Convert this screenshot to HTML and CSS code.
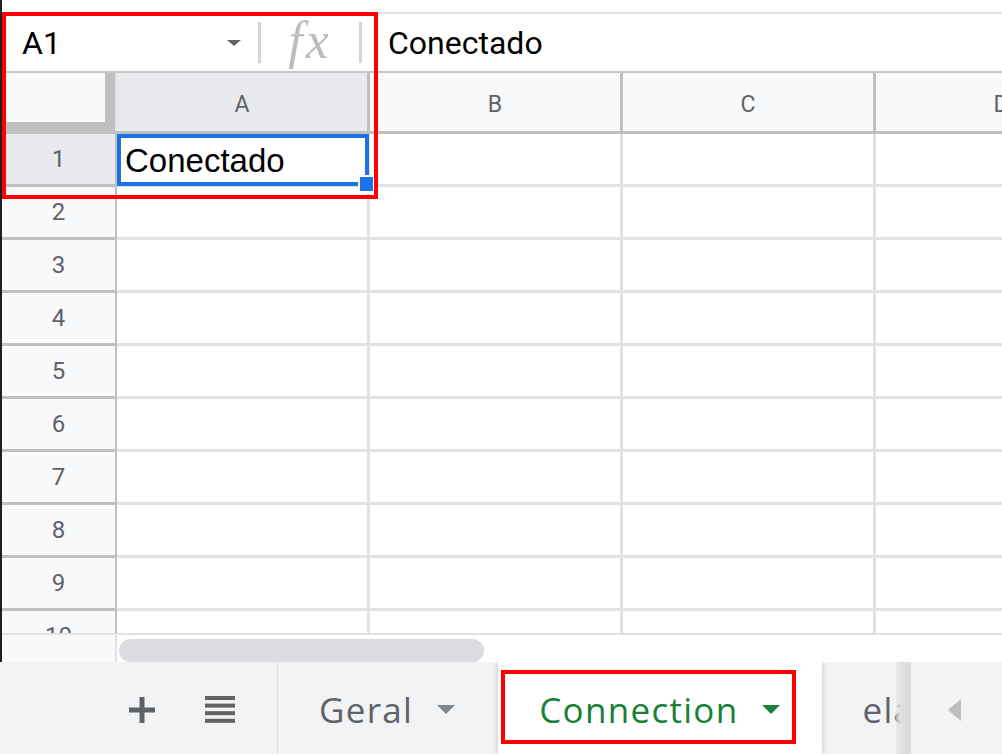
FILE: index.html
```html
<!DOCTYPE html>
<html lang="pt">
<head>
<meta charset="utf-8">
<title>Planilha</title>
<link rel="stylesheet" href="styles.css">
</head>
<body>
<div class="app">
  <div class="sheet">
    <div class="topstrip"></div>
    <div class="fbar">
      <div class="namebox"><span class="ref">A1</span><span class="caret"></span></div>
      <div class="vsep"></div>
      <div class="fx">fx</div>
      <div class="vsep"></div>
      <div class="ftext">Conectado</div>
    </div>
    <div class="hdr">
      <div class="corner"></div>
      <div class="ch sel">A</div>
      <div class="ch">B</div>
      <div class="ch">C</div>
      <div class="ch">D</div>
    </div>
    <div class="body">
      <div class="row"><div class="rh sel">1</div><div class="cell a1"><span>Conectado</span><div class="selbox"></div><div class="handle"></div></div><div class="cell"></div><div class="cell"></div><div class="cell"></div></div>
      <div class="row"><div class="rh">2</div><div class="cell"></div><div class="cell"></div><div class="cell"></div><div class="cell"></div></div>
      <div class="row"><div class="rh">3</div><div class="cell"></div><div class="cell"></div><div class="cell"></div><div class="cell"></div></div>
      <div class="row"><div class="rh">4</div><div class="cell"></div><div class="cell"></div><div class="cell"></div><div class="cell"></div></div>
      <div class="row"><div class="rh">5</div><div class="cell"></div><div class="cell"></div><div class="cell"></div><div class="cell"></div></div>
      <div class="row"><div class="rh">6</div><div class="cell"></div><div class="cell"></div><div class="cell"></div><div class="cell"></div></div>
      <div class="row"><div class="rh">7</div><div class="cell"></div><div class="cell"></div><div class="cell"></div><div class="cell"></div></div>
      <div class="row"><div class="rh">8</div><div class="cell"></div><div class="cell"></div><div class="cell"></div><div class="cell"></div></div>
      <div class="row"><div class="rh">9</div><div class="cell"></div><div class="cell"></div><div class="cell"></div><div class="cell"></div></div>
      <div class="row"><div class="rh">10</div><div class="cell"></div><div class="cell"></div><div class="cell"></div><div class="cell"></div></div>
    </div>
    <div class="scroll">
      <div class="sc-corner"></div>
      <div class="sc-track"><div class="thumb"></div></div>
    </div>
  </div>
  <div class="tabs">
    <div class="tools">
      <svg class="ico" width="26" height="26" viewBox="0 0 26 26"><rect x="0" y="10.5" width="26" height="5" fill="#5f6368"/><rect x="10.5" y="0" width="5" height="26" fill="#5f6368"/></svg>
      <svg class="ico" width="30" height="27" viewBox="0 0 30 27"><rect x="0" y="0" width="30" height="4" fill="#616161"/><rect x="0" y="7.6" width="30" height="4" fill="#616161"/><rect x="0" y="15.2" width="30" height="4" fill="#616161"/><rect x="0" y="22.8" width="30" height="4" fill="#616161"/></svg>
    </div>
    <div class="tab">Geral<span class="tcaret"></span></div>
    <div class="tab active">Connection<span class="tcaret"></span></div>
    <div class="tab third">elaborado</div>
    <div class="tnav"><span class="larr"></span></div>
  </div>
  <div class="mark mark1"></div>
  <div class="mark mark2"></div>
</div>
</body>
</html>
```
FILE: styles.css
```css
* { box-sizing: border-box; }
body {
  margin: 0;
  width: 1002px;
  height: 754px;
  overflow: hidden;
  background: #fff;
  font-family: Roboto, "Liberation Sans", sans-serif;
}
.app {
  position: relative;
  width: 1002px;
  height: 754px;
  overflow: hidden;
  display: flex;
  flex-direction: column;
}
.sheet {
  height: 662px;
  flex-shrink: 0;
  border-left: 2px solid #202124;
  display: flex;
  flex-direction: column;
  overflow: hidden;
}
.topstrip {
  height: 14px;
  flex-shrink: 0;
  border-bottom: 2px solid #e3e3e3;
}
.fbar {
  height: 59px;
  flex-shrink: 0;
  border-bottom: 2px solid #c7c7c7;
  display: flex;
  align-items: center;
}
.namebox {
  width: 256px;
  flex-shrink: 0;
  padding-left: 20px;
  display: flex;
  align-items: center;
  font-size: 32px;
  color: #000;
}
.caret {
  margin-left: auto;
  margin-right: 17px;
  border-left: 7px solid transparent;
  border-right: 7px solid transparent;
  border-top: 6px solid #5f6368;
}
.vsep {
  width: 3px;
  height: 41px;
  flex-shrink: 0;
  background: #d4d4d4;
}
.fx {
  width: 98px;
  flex-shrink: 0;
  text-align: center;
  font-family: "Liberation Serif", serif;
  font-style: italic;
  font-size: 52px;
  letter-spacing: 3px;
  color: #bdbdbd;
  line-height: 1;
  padding-bottom: 4px;
}
.ftext {
  padding-left: 26px;
  font-size: 32px;
  color: #000;
}
.hdr {
  height: 61px;
  flex-shrink: 0;
  display: flex;
  border-bottom: 3px solid #c0c0c0;
  background: #f8f9fa;
}
.corner {
  width: 115px;
  flex-shrink: 0;
  background: #f8f9fa;
  border-right: 2px solid #e3e3e3;
  box-shadow: inset -10px -9px 0 #c0c0c0;
}
.ch {
  width: 253px;
  flex-shrink: 0;
  border-right: 3px solid #c0c0c0;
  display: flex;
  align-items: center;
  justify-content: center;
  padding-top: 4px;
  font-size: 23px;
  color: #5f6368;
}
.ch.sel { background: #e8eaed; }
.body {
  height: 501px;
  flex-shrink: 0;
  overflow: hidden;
  border-bottom: 2px solid #e2e2e2;
}
.row {
  display: flex;
  height: 53px;
}
.rh {
  width: 115px;
  height: 53px;
  flex-shrink: 0;
  border-right: 2px solid #c0c0c0;
  border-bottom: 3px solid #c0c0c0;
  background: #f8f9fa;
  display: flex;
  align-items: center;
  justify-content: center;
  font-size: 24px;
  color: #5f6368;
}
.rh.sel { background: #e8eaed; }
.cell {
  width: 253px;
  height: 53px;
  flex-shrink: 0;
  position: relative;
  border-right: 3px solid #e2e2e2;
  border-bottom: 3px solid #e2e2e2;
}
.a1 {
  display: flex;
  align-items: flex-end;
  padding: 0 0 4px 8px;
  font-family: "Liberation Sans", Arial, sans-serif;
  font-size: 33px;
  line-height: 38px;
  color: #000;
}
.selbox {
  position: absolute;
  left: 0;
  top: 0;
  width: 252px;
  height: 52px;
  border: 4px solid #1a73e8;
}
.handle {
  position: absolute;
  z-index: 1;
  left: 241px;
  top: 41px;
  width: 17px;
  height: 18px;
  background: #1a73e8;
  border: 2px solid #fff;
}
.scroll {
  height: 27px;
  flex-shrink: 0;
  display: flex;
}
.sc-corner {
  width: 115px;
  flex-shrink: 0;
  background: #f8f9fa;
  border-right: 2px solid #e3e3e3;
}
.sc-track {
  flex: 1;
  padding: 4px 0 0 2px;
}
.thumb {
  width: 365px;
  height: 23px;
  border-radius: 12px;
  background: #dadce0;
}
.tabs {
  position: relative;
  height: 92px;
  flex-shrink: 0;
  display: flex;
  background: #f1f3f4;
  overflow: hidden;
}
.tools {
  width: 278px;
  flex-shrink: 0;
  border-right: 1px solid #dadce0;
  display: flex;
  align-items: center;
  padding: 3px 0 0 129px;
  gap: 50px;
}
.ico { display: block; }
.tab {
  flex-shrink: 0;
  display: flex;
  align-items: center;
  padding: 3px 43px 0 41px;
  font-family: "Open Sans", sans-serif;
  font-size: 35px;
  letter-spacing: 1.3px;
  color: #5f6368;
  white-space: nowrap;
}
.tcaret {
  margin-left: 24px;
  border-left: 9px solid transparent;
  border-right: 9px solid transparent;
  border-top: 9px solid #80868b;
}
.tab.active {
  position: relative;
  z-index: 1;
  background: #fff;
  color: #188038;
  padding-right: 42px;
  box-shadow: 0 0 6px rgba(60, 64, 67, 0.28);
}
.tab.active .tcaret { border-top-color: #188038; }
.tab.third { padding-left: 40px; }
.tnav {
  position: absolute;
  left: 896px;
  top: 0;
  right: 0;
  bottom: 0;
  z-index: 2;
  display: flex;
  align-items: center;
  padding-top: 3px;
  background: linear-gradient(to right, rgba(226, 228, 230, 0.55) 0, #dfe0e1 5px, #d9dadb 15px, #f1f3f4 15px);
}
.larr {
  margin-left: 52px;
  border-right: 13px solid #bdbdbd;
  border-top: 11px solid transparent;
  border-bottom: 11px solid transparent;
}
.mark {
  position: absolute;
  z-index: 5;
  border: 4px solid #ff0000;
}
.mark1 { left: 2px; top: 12px; width: 376px; height: 187px; }
.mark2 { left: 501px; top: 670px; width: 295px; height: 74px; }
```
